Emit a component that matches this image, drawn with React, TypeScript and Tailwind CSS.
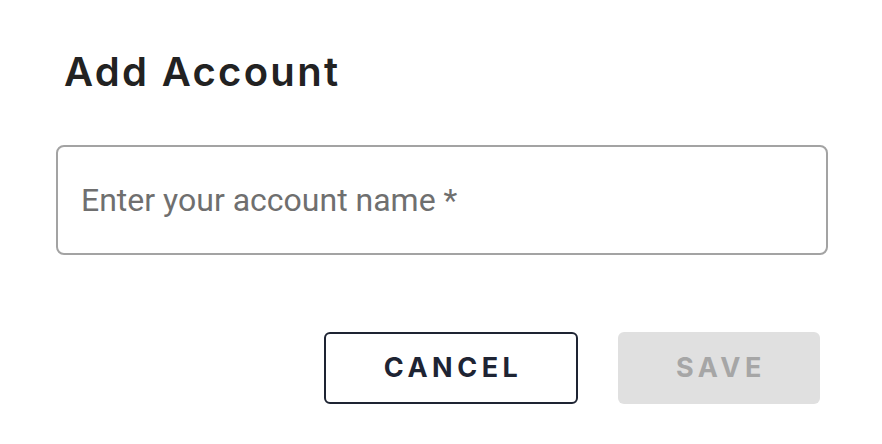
export default function App() {
  return (
    <div className="w-[882px] h-[444px] bg-white overflow-hidden">
      <div className="pt-[46px] pl-[64px]">
        <h2 className="text-[40px] leading-[52px] font-semibold text-[#222222] tracking-[2.3px] font-['Inter',sans-serif]">
          Add Account
        </h2>
      </div>
      <div className="pl-[56px] pr-[54px] mt-[47px]">
        <input
          type="text"
          placeholder="Enter your account name *"
          className="w-full h-[110px] rounded-[8px] border-2 border-[#a3a3a3] px-[23px] text-[32px] text-[#333] placeholder:text-[#6f6f6f] font-['Roboto',sans-serif] outline-none"
        />
      </div>
      <div className="flex justify-end gap-[40px] pr-[62px] mt-[77px]">
        <button className="w-[254px] h-[72px] rounded-[6px] border-2 border-[#1e2433] text-[#1e2433] text-[27px] font-bold tracking-[4.5px] pl-[4px] font-['Inter',sans-serif]">
          CANCEL
        </button>
        <button
          disabled
          className="w-[202px] h-[72px] rounded-[6px] bg-[#e0e0e0] text-[#a6a6a6] text-[27px] font-bold tracking-[4.5px] pl-[4px] font-['Inter',sans-serif]"
        >
          SAVE
        </button>
      </div>
    </div>
  );
}
